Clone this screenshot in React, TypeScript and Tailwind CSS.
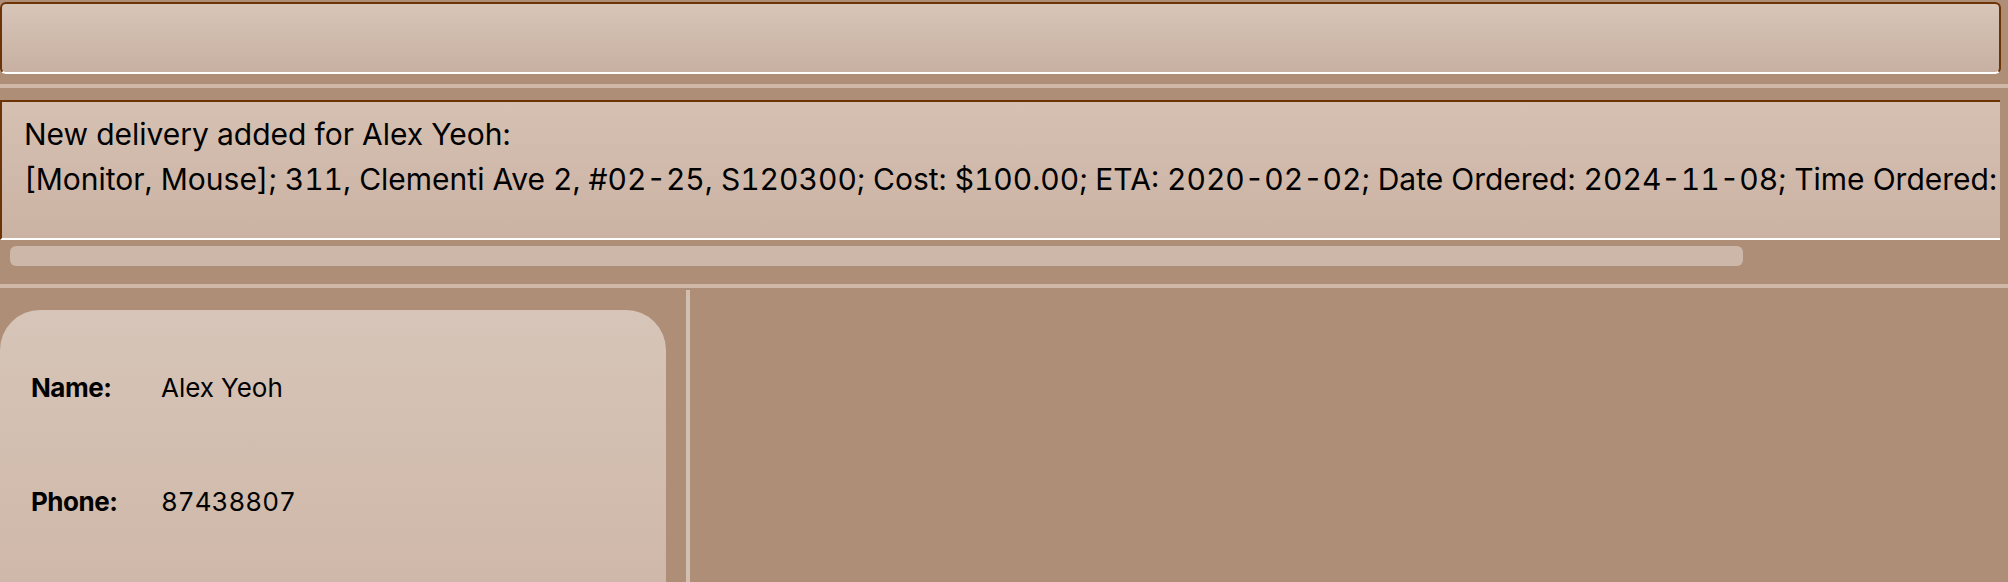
import React from 'react';

const App = () => {
  const details = [
    { label: 'Name:', value: 'Alex Yeoh' },
    { label: 'Phone:', value: '87438807' },
  ];

  return (
    <div className="w-[2008px] h-[582px] bg-[#ae8e76] overflow-hidden flex flex-col font-['Inter','Liberation_Sans',sans-serif] text-black">
      {/* command box */}
      <div className="mt-[2px] mr-[7px] h-[72px] shrink-0 rounded-[6px] border-2 border-[#6b3306] border-b-white bg-gradient-to-b from-[#d7c5b8] to-[#c7b0a1]" />

      <div className="mt-[10px] h-[4px] shrink-0 bg-[#cfb8a8]" />

      {/* result box */}
      <div className="mt-[12px] mr-[8px] h-[140px] shrink-0 overflow-hidden border-t-2 border-l-2 border-b-2 border-[#6b3306] border-b-white bg-gradient-to-b from-[#d5c0b2] to-[#cbb3a3] pl-[22px] pt-[10px] tabular-nums">
        <p className="whitespace-nowrap text-[30px] leading-[45px]">New delivery added for Alex Yeoh:</p>
        <p className="whitespace-nowrap text-[30px] leading-[45px]">
          [Monitor, Mouse]; 311, Clementi Ave 2, #02-25, S120300; Cost: $100.00; ETA: 2020-02-02; Date Ordered: 2024-11-08; Time Ordered:
        </p>
      </div>

      {/* horizontal scrollbar */}
      <div className="h-[44px] shrink-0 pt-[6px] pl-[10px]">
        <div className="h-[20px] w-[1733px] rounded-[6px] bg-[#ccb7a8]" />
      </div>

      <div className="h-[4px] shrink-0 bg-[#cfb8a8]" />

      <div className="flex flex-1 min-h-0">
        <div className="w-[686px] shrink-0 pt-[22px]">
          <div className="w-[666px] h-full rounded-t-[40px] bg-gradient-to-b from-[#d6c5b8] to-[#cfb8a9] pt-[20px] pl-[31px]">
            {details.map(d => (
              <div key={d.label} className="flex items-center h-[114px]">
                <span className="w-[130px] text-[26px] font-bold tracking-[-0.5px]">{d.label}</span>
                <span className="text-[26px] tabular-nums">{d.value}</span>
              </div>
            ))}
          </div>
        </div>
        <div className="w-[4px] mt-[2px] shrink-0 bg-[#d3bfb1]" />
        <div className="flex-1" />
      </div>
    </div>
  );
};

export default App;
